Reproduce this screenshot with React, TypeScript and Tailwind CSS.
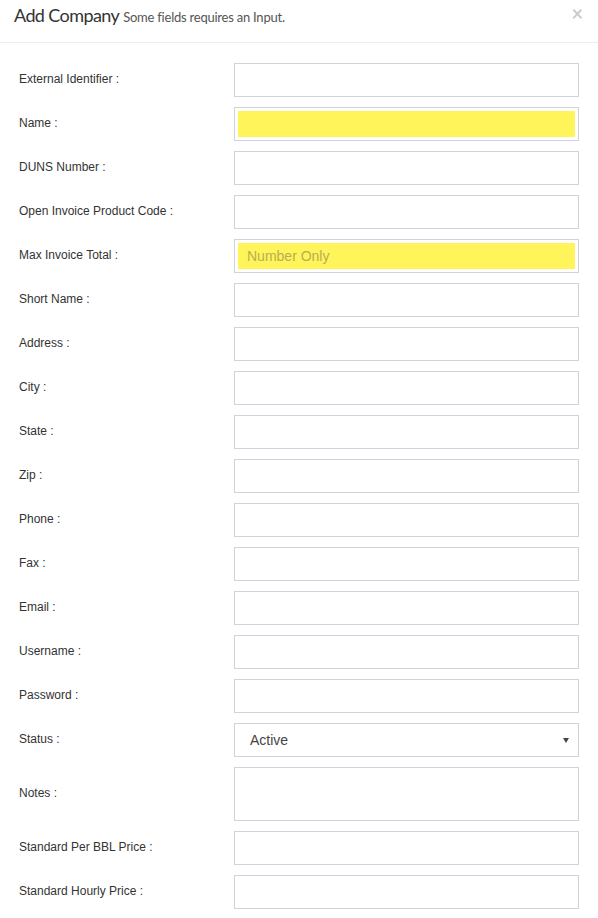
import React from "react";

const fields: { label: string; kind?: "yellow" | "select" | "textarea"; placeholder?: string }[] = [
  { label: "External Identifier :" },
  { label: "Name :", kind: "yellow" },
  { label: "DUNS Number :" },
  { label: "Open Invoice Product Code :" },
  { label: "Max Invoice Total :", kind: "yellow", placeholder: "Number Only" },
  { label: "Short Name :" },
  { label: "Address :" },
  { label: "City :" },
  { label: "State :" },
  { label: "Zip :" },
  { label: "Phone :" },
  { label: "Fax :" },
  { label: "Email :" },
  { label: "Username :" },
  { label: "Password :" },
  { label: "Status :", kind: "select" },
  { label: "Notes :", kind: "textarea" },
  { label: "Standard Per BBL Price :" },
  { label: "Standard Hourly Price :" },
];

function Field({ f }: { f: (typeof fields)[number] }) {
  if (f.kind === "yellow") {
    return (
      <div className="w-[345px] h-[34px] border border-[#d2d2dc] p-[3px]">
        <div className="w-full h-full bg-[#fff459] flex items-center pl-[9px] text-[14px] text-[#b8ae55]">
          {f.placeholder ?? ""}
        </div>
      </div>
    );
  }
  if (f.kind === "select") {
    return (
      <div className="w-[345px] h-[34px] border border-[#d2d2dc] flex items-center pl-[15px] pr-[9px] text-[14px] text-[#444]">
        <span className="flex-1">Active</span>
        <svg width="6" height="5" viewBox="0 0 6 5">
          <polygon points="0,0 6,0 3,5" fill="#444" />
        </svg>
      </div>
    );
  }
  if (f.kind === "textarea") {
    return <div className="w-[345px] h-[54px] border border-[#d2d2dc]" />;
  }
  return <div className="w-[345px] h-[34px] border border-[#d2d2dc]" />;
}

export default function App() {
  return (
    <div className="w-[598px] h-[918px] bg-white overflow-hidden" style={{ fontFamily: "'Liberation Sans', Arial, sans-serif" }}>
      <div className="h-[43px] border-b border-[#ededed] flex items-start pl-[14px] pr-[15px] pt-[2px]" style={{ fontFamily: "Lato, 'Noto Sans', sans-serif" }}>
        <div className="flex-1 flex items-baseline gap-[4px]">
          <span className="text-[18px] text-[#333] tracking-[-0.6px]">Add Company</span>
          <span className="text-[13px] text-[#555] tracking-[-0.23px]">Some fields requires an Input.</span>
        </div>
        <span className="text-[20px] leading-[20px] font-bold text-[#ccc] mt-[1px]">×</span>
      </div>
      <div className="pt-[20px] flex flex-col gap-[10px]">
        {fields.map((f) => (
          <div key={f.label} className="flex items-center">
            <div className="w-[234px] pl-[19px] pb-[2px] text-[12px] text-[#333]">{f.label}</div>
            <Field f={f} />
          </div>
        ))}
      </div>
    </div>
  );
}
